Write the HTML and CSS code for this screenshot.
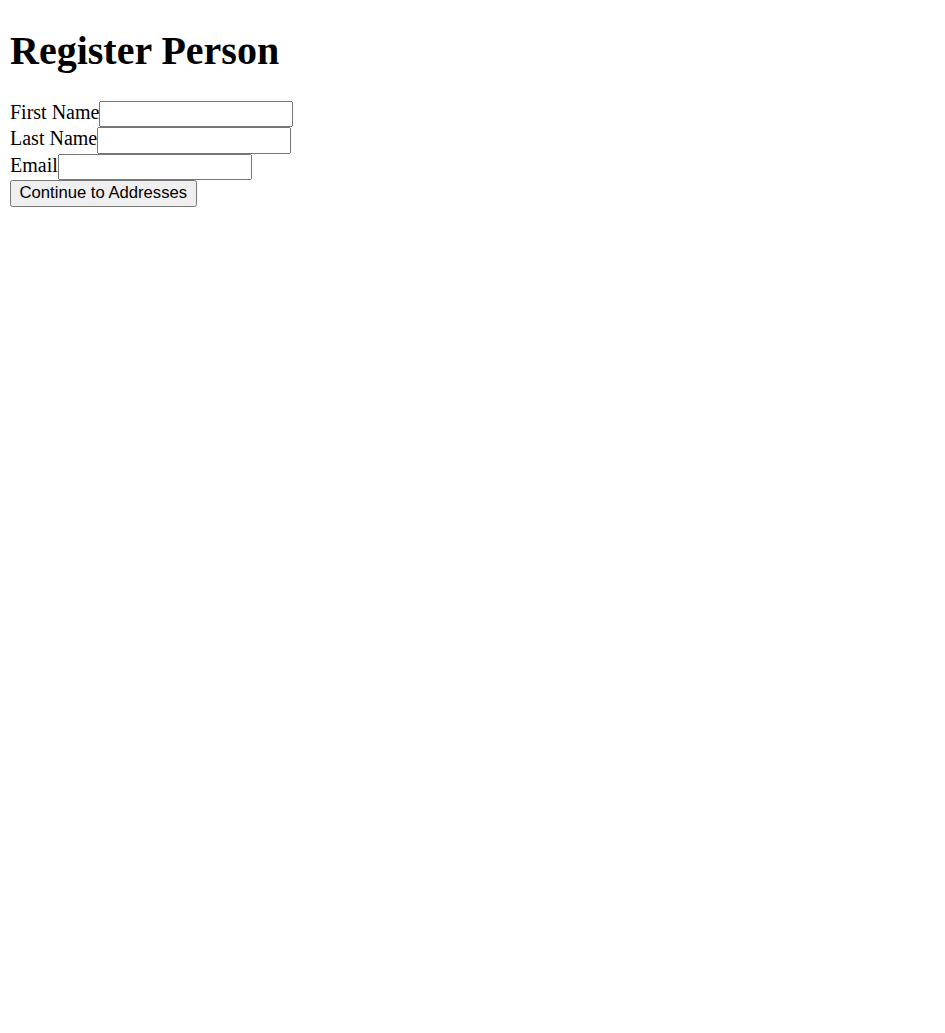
FILE: index.html
```html
<!DOCTYPE html>
<html>
<head>
<meta charset="utf-8">
<title>Register Person</title>
<link rel="stylesheet" href="styles.css">
</head>
<body class="page">
<h1 class="title">Register Person</h1>
<form class="form">
  <div class="row"><label class="label" for="first">First Name</label><input class="field" id="first" type="text"></div>
  <div class="row"><label class="label" for="last">Last Name</label><input class="field" id="last" type="text"></div>
  <div class="row"><label class="label" for="email">Email</label><input class="field" id="email" type="email"></div>
  <button class="submit" type="submit">Continue to Addresses</button>
</form>
</body>
</html>
```
FILE: styles.css
```css
html {
  zoom: 1.25;
}
.page {
  font-family: "Liberation Serif", "Times New Roman", serif;
  color: #000;
  background: #fff;
}
.title {
  margin-top: 13.5px;
}
.field {
  font-family: "Liberation Sans", Arial, sans-serif;
  width: 155px;
  box-sizing: border-box;
}
.submit {
  font-family: "Liberation Sans", Arial, sans-serif;
}
```
